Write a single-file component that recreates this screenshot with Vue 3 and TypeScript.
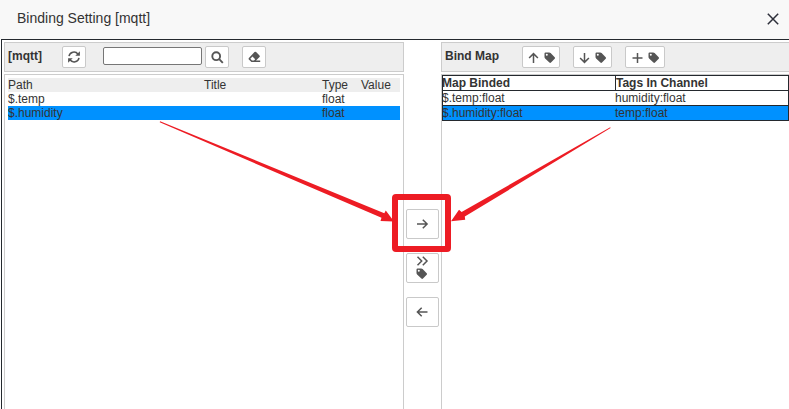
<script setup lang="ts">
interface Tag {
  path: string
  title: string
  type: string
  value: string
}
interface Binding {
  source: string
  target: string
}

const tags: Tag[] = [
  { path: '$.temp', title: '', type: 'float', value: '' },
  { path: '$.humidity', title: '', type: 'float', value: '' },
]
const bindings: Binding[] = [
  { source: '$.temp:float', target: 'humidity:float' },
  { source: '$.humidity:float', target: 'temp:float' },
]
const selected = 1

const tagPath =
  'M.5 1.6Q.5 .5 1.6 .5H5.2Q6 .5 6.6 1.1L10.7 5.2Q11.5 6 10.7 6.8L7 10.6Q6.2 11.3 5.4 10.6L1.1 6.4Q.5 5.8 .5 5ZM2.8 1.8A1 1 0 1 0 2.8 3.8A1 1 0 1 0 2.8 1.8Z'
const upPath = 'M5.5 11V1.6M1.1 6L5.5 1.6L9.9 6'
const downPath = 'M5.5 1V10.4M1.1 6L5.5 10.4L9.9 6'
const plusPath = 'M5.5 1V11M.5 6H10.5'
const actions: string[] = [upPath, downPath, plusPath]
</script>

<template>
  <div class="dialog">
    <header class="title">
      <span>Binding Setting [mqtt]</span>
      <svg class="close" width="12" height="12" viewBox="0 0 12 12"><path d="M.8 .8L11.2 11.2M11.2 .8L.8 11.2" /></svg>
    </header>
    <main class="body">
      <section class="left">
        <div class="bar">
          <b class="name">[mqtt]</b>
          <button class="btn refresh">
            <svg width="14" height="14" viewBox="0 0 14 14"><path class="line ring" d="M2 6.2A5 5 0 0 1 11 4.2M12 7.8A5 5 0 0 1 3 9.8" /><path d="M12.9 1.2V5.8H8.3ZM1.1 12.8V8.2H5.7Z" /></svg>
          </button>
          <input class="search" type="text" />
          <button class="btn find">
            <svg width="13" height="13" viewBox="0 0 13 13"><circle class="line" cx="5.2" cy="5.2" r="3.9" /><path class="line" d="M8.2 8.2L11.8 11.8" /></svg>
          </button>
          <button class="btn clear">
            <svg width="13" height="12" viewBox="0 0 13 12"><path fill-rule="evenodd" d="M6.5 1Q7.3 .3 8.1 1L11.5 4.4Q12.2 5.2 11.5 6L8 9.5H12.2V11H3.4L.9 8.5Q.2 7.7 .9 6.9ZM4.5 5.6L2.3 7.8L4 9.5H6L7.2 8.3Z" /></svg>
          </button>
        </div>
        <div class="panel">
          <table class="tags">
            <colgroup><col class="c1" /><col class="c2" /><col class="c3" /><col /></colgroup>
            <thead><tr><td>Path</td><td>Title</td><td>Type</td><td>Value</td></tr></thead>
            <tbody>
              <tr v-for="(t, i) in tags" :key="t.path" :class="{ on: i === selected }">
                <td>{{ t.path }}</td><td>{{ t.title }}</td><td>{{ t.type }}</td><td>{{ t.value }}</td>
              </tr>
            </tbody>
          </table>
        </div>
      </section>
      <nav class="mid">
        <button class="move"><svg width="13" height="12" viewBox="0 0 13 12"><path class="thin" d="M1 6H11M6.8 1.7L11.1 6L6.8 10.3" /></svg></button>
        <button class="move">
          <svg width="13" height="10" viewBox="0 0 13 10"><path class="thin" d="M1.5 .8L5.7 5L1.5 9.2M6.8 .8L11 5L6.8 9.2" /></svg>
          <svg width="13" height="12" viewBox="0 0 13 12"><path fill-rule="evenodd" :d="tagPath" /></svg>
        </button>
        <button class="move"><svg width="13" height="12" viewBox="0 0 13 12"><path class="thin" d="M11.5 6H1.5M5.7 1.7L1.4 6L5.7 10.3" /></svg></button>
      </nav>
      <section class="right">
        <div class="bar">
          <b class="name">Bind Map</b>
          <button v-for="(d, i) in actions" :key="i" class="btn wide" :class="'w' + i">
            <svg width="11" height="12" viewBox="0 0 11 12"><path class="thin" :d="d" /></svg>
            <svg width="12" height="12" viewBox="0 0 12 12"><path fill-rule="evenodd" :d="tagPath" /></svg>
          </button>
        </div>
        <div class="panel">
          <div class="map">
            <div class="row head"><b>Map Binded</b><b>Tags In Channel</b></div>
            <div v-for="(b, i) in bindings" :key="b.source" class="row" :class="{ on: i === selected }">
              <span>{{ b.source }}</span><span>{{ b.target }}</span>
            </div>
          </div>
        </div>
      </section>
    </main>
    <svg class="notes" width="789" height="409" viewBox="0 0 789 409">
      <rect x="395" y="197" width="53" height="52" rx="1" />
      <path d="M159.7 122.3L381.5 217.8L380.5 221L394 221.5L385.8 210.5L384.3 213.2L160.1 121.3Z" />
      <path d="M610.6 128L464.8 216.6L465.2 219.8L451 221.2L459 209.8L461.6 212L610.2 127.2Z" />
    </svg>
  </div>
</template>

<style>
body { background: #fff; overflow: hidden; }
</style>

<style scoped>
* { box-sizing: border-box; }
.dialog { position: relative; width: 789px; height: 409px; overflow: hidden; display: flex; flex-direction: column; font: 12px/14px "Liberation Sans", Arial, sans-serif; color: #333; }
.title { height: 39px; flex: none; background: #f8f8f8; display: flex; justify-content: space-between; align-items: center; padding: 0 10px 3px 17px; font-size: 14px; line-height: 20px; }
.close { fill: none; stroke: #2d2f3a; stroke-width: 1.5; margin-top: 1px; }
.body { flex: 1; display: flex; margin-left: 1px; border-top: 1px solid #24292e; border-left: 1px solid #24292e; padding: 2px 0 0 2px; }
.left { width: 400px; flex: none; display: flex; flex-direction: column; gap: 2px; }
.right { width: 360px; flex: none; display: flex; flex-direction: column; gap: 2px; }
.bar { height: 30px; flex: none; border: 1px solid #ccc; background: #eee; display: flex; align-items: flex-start; padding: 3px; }
.name { line-height: 14px; margin-top: 3px; white-space: nowrap; }
.left .name { width: 54px; }
.right .name { width: 77px; }
.btn { flex: none; width: 24px; height: 22px; padding: 0; border: 1px solid #c9c9c9; border-radius: 2px; background: #fff; display: flex; align-items: center; justify-content: center; }
svg { fill: #555; flex: none; }
.line { fill: none; stroke: #555; stroke-width: 1.9; }
.ring { stroke-width: 1.5; }
.thin { fill: none; stroke: #555; stroke-width: 1.5; }
.search { width: 99px; height: 18px; margin: 1px 3px 0 17px; border: 1px solid #767676; border-radius: 2px; background: #fff; padding: 0; }
.clear { margin-left: 13px; }
.wide { width: 38px; gap: 5px; padding: 2px 0 0 1px; margin-right: 13px; }
.w1 { width: 39px; padding-left: 0; }
.w2 { width: 40px; }
.panel { flex: 1; border: 1px solid #ccc; border-bottom: 0; background: #fff; }
.left .panel { padding: 3px; }
.tags { width: 392px; border-collapse: collapse; table-layout: fixed; }
.c1 { width: 196px; }
.c2 { width: 118px; }
.c3 { width: 39px; }
.tags td { padding: 0; height: 14px; line-height: 14px; }
.tags thead { background: #eee; }
.on { background: #0091ff; }
.mid { width: 37px; flex: none; display: flex; flex-direction: column; align-items: center; gap: 14px; padding-top: 167px; }
.move { width: 33px; height: 30px; padding: 0 1px 0 0; border: 1px solid #c9c9c9; border-radius: 2px; background: #fff; display: flex; flex-direction: column; align-items: center; justify-content: center; gap: 2px; }
.map { width: 347px; height: 46px; border: 1px solid #24292e; border-top: 0; }
.row { height: 15px; display: flex; border-top: 1px solid #24292e; }
.row > :first-child { width: 173px; margin-left: -1px; }
.head > :last-child { border-left: 1px solid #24292e; }
.notes { position: absolute; left: 0; top: 0; pointer-events: none; }
.notes path { fill: #ed1c24; }
.notes rect { fill: none; stroke: #ed1c24; stroke-width: 6; }
</style>
